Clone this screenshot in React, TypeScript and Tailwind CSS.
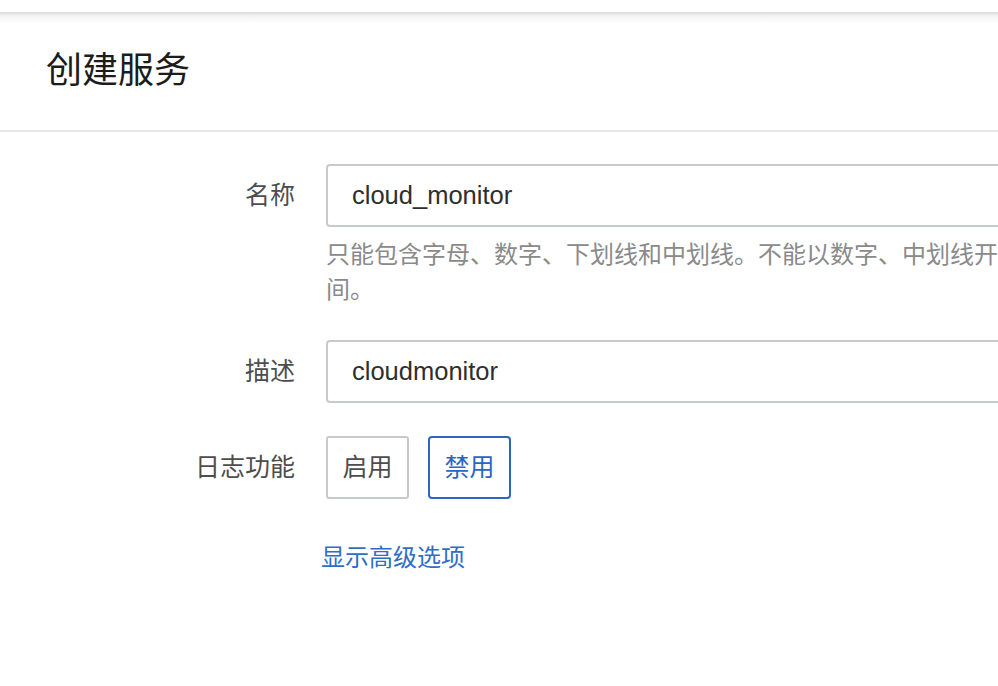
import React from "react";

const font = { fontFamily: '"Liberation Sans", "Noto Sans CJK SC", sans-serif' };

export default function App() {
  return (
    <div
      className="w-[998px] h-[686px] overflow-hidden bg-white"
      style={font}
    >
      <div className="h-[12px] bg-white" />
      <div className="h-[118px] flex items-center pl-[46px] bg-[linear-gradient(to_bottom,#d9d9d9,#f3f3f3_4px,#ffffff_11px)] border-b-2 border-[#e6e6e6] box-content">
        <h1 className="text-[36px] leading-none text-[#1c1c1c] font-normal">创建服务</h1>
      </div>

      <div className="pt-[32px]">
        <div className="flex items-center">
          <div className="w-[295px] shrink-0 text-right text-[25px] text-[#4d4d4d] leading-none">名称</div>
          <input
            readOnly
            value="cloud_monitor"
            className="ml-[31px] shrink-0 w-[720px] h-[63px] box-border border-2 border-[#c6c9cd] rounded-[4px] pl-[24px] text-[25.5px] text-[#2e2e2e] outline-none bg-white"
          />
        </div>
        <div className="ml-[326px] mt-[10px] text-[24px] leading-[35px] text-[#8a8a8a] whitespace-nowrap">
          <div>只能包含字母、数字、下划线和中划线。不能以数字、中划线开</div>
          <div>间。</div>
        </div>

        <div className="flex items-center mt-[33px]">
          <div className="w-[295px] shrink-0 text-right text-[25px] text-[#4d4d4d] leading-none">描述</div>
          <input
            readOnly
            value="cloudmonitor"
            className="ml-[31px] shrink-0 w-[720px] h-[63px] box-border border-2 border-[#c6c9cd] rounded-[4px] pl-[24px] text-[25.5px] text-[#2e2e2e] outline-none bg-white"
          />
        </div>

        <div className="flex items-center mt-[33px]">
          <div className="w-[295px] shrink-0 text-right text-[25px] text-[#4d4d4d] leading-none">日志功能</div>
          <div className="ml-[31px] flex gap-[19px]">
            <button className="w-[83px] h-[63px] box-border border-2 border-[#c6c9cd] rounded-[3px] text-[25px] text-[#4d4d4d] bg-white flex items-center justify-center">
              启用
            </button>
            <button className="w-[83px] h-[63px] box-border border-2 border-[#2b66c2] rounded-[4px] text-[25px] text-[#2b66c2] bg-white flex items-center justify-center">
              禁用
            </button>
          </div>
        </div>

        <div className="mt-[41px] pl-[321px]">
          <a className="text-[24px] leading-[35px] text-[#2d6ec6] cursor-pointer">显示高级选项</a>
        </div>
      </div>
    </div>
  );
}
